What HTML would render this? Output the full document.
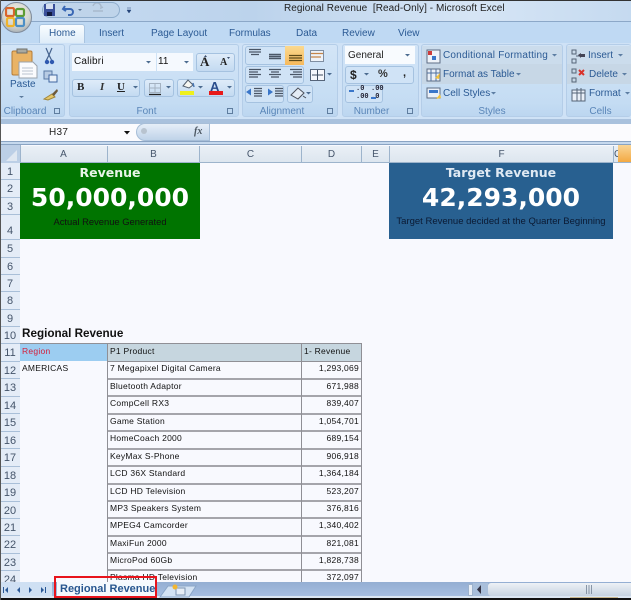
<!DOCTYPE html>
<html><head><meta charset="utf-8">
<style>
html,body{margin:0;padding:0;background:#f8f9fe}
#p{position:relative;width:631px;height:600px;overflow:hidden;background:#f8f9fe;font-family:"Liberation Sans",sans-serif;font-size:9px;color:#111}
#p div{position:absolute;white-space:nowrap}
.rb{color:#2b5a94;font-size:10px}
.lb{color:#5a86b8;font-size:10px;text-align:center;top:106px;height:12px;line-height:12px}
.g{top:44px;height:73px;background:linear-gradient(#d3e5f7 0,#c4dcf3 82%,#bcd6f0 100%);border:1px solid #b4cde8;border-radius:3px;box-sizing:border-box}
.btn{background:linear-gradient(#dfecf9,#c3daf1);border:1px solid #a5c2e0;border-radius:3px;box-sizing:border-box}
.ch{top:146px;height:16px;line-height:17px;background:linear-gradient(#eaf0f6 0,#dde6ef 100%);border-right:1px solid #9db4cc;box-sizing:border-box;text-align:center;font-size:10px;color:#46566c}
.rh{left:0;width:20px;background:#e4ecf7;border-bottom:1px solid #a9bfd8;box-sizing:border-box;text-align:center;font-size:11px;color:#44546a;line-height:19px}
.c{font-size:8.5px;height:17px;line-height:15px;color:#111;letter-spacing:.25px}
.hl{left:107px;width:255px;height:2px;background:#a5a5ab}
.vl{width:1px;background:#8f8f95}
</style></head><body><div id="p">

<!-- tab strip -->
<div style="left:0;top:21px;width:631px;height:1px;background:#8ca8c8"></div>
<div style="left:0;top:22px;width:631px;height:21px;background:#bfd9f3"></div>
<div style="left:39px;top:24px;width:46px;height:20px;background:linear-gradient(#fafdff,#dcebf8);border:1px solid #a9c4e0;border-bottom:0;border-radius:3px 3px 0 0;box-sizing:border-box"></div>
<div class="rb" style="left:49px;top:28px">Home</div>
<div class="rb" style="left:99px;top:28px">Insert</div>
<div class="rb" style="left:151px;top:28px">Page Layout</div>
<div class="rb" style="left:229px;top:28px">Formulas</div>
<div class="rb" style="left:296px;top:28px">Data</div>
<div class="rb" style="left:342px;top:28px">Review</div>
<div class="rb" style="left:398px;top:28px">View</div>

<!-- title bar -->
<div style="left:0;top:0;width:631px;height:21px;background:linear-gradient(90deg,#c8dcf2 0,#bcd3ec 40%,#d6e5f5 75%,#c5daf0 100%)"></div>
<div style="left:0;top:0;width:631px;height:1px;background:#333"></div>
<div style="left:42px;top:2px;width:78px;height:16px;background:#bfd4ea;border:1px solid #8eaccb;border-radius:9px;box-sizing:border-box"></div>
<div style="left:284px;top:3px;font-size:10px;line-height:12px;color:#222;letter-spacing:.06px">Regional Revenue&nbsp; [Read-Only] - Microsoft Excel</div>
<svg style="position:absolute;left:43px;top:3px" width="90" height="14"><rect x="1" y="1" width="11" height="12" fill="#3a4f9a"/><rect x="3" y="1" width="7" height="5" fill="#d5dff0"/><rect x="4" y="9" width="5" height="4" fill="#111a40"/><path d="M22 3l-2 3 3 2M20 6h7a3 3 0 0 1 0 6h-2" fill="none" stroke="#3a68b5" stroke-width="2"/><path d="M35 6h4l-2 2z" fill="#55718f"/><path d="M50 3a4 4 0 0 1 8 2l2-1M50 8h10" fill="none" stroke="#a9bacd" stroke-width="1.5"/><path d="M84 5h4M84 7h4l-2 3z" fill="#26467a" stroke="#26467a" stroke-width=".5"/></svg>
<!-- office orb -->
<div style="left:1px;top:2px;width:31px;height:31px;border-radius:50%;background:radial-gradient(circle at 50% 35%,#f3f1e8 0,#d4d6d0 55%,#8c97a5 100%);border:1px solid #7f8b9b;box-sizing:border-box"></div>
<svg style="position:absolute;left:5px;top:7px" width="22" height="22"><rect x="1" y="1" width="8" height="8" rx="1.5" fill="none" stroke="#d9642c" stroke-width="2.2"/><rect x="11" y="2" width="8" height="7" rx="1.5" fill="none" stroke="#5d9d33" stroke-width="2.2"/><rect x="2" y="11" width="7" height="8" rx="1.5" fill="none" stroke="#eeb32d" stroke-width="2.2"/><rect x="11" y="11" width="8" height="8" rx="1.5" fill="none" stroke="#4c8fc6" stroke-width="2.2"/></svg>

<!-- ribbon -->
<div style="left:0;top:43px;width:631px;height:76px;background:#cfe2f6"></div>
<div class="g" style="left:0;width:65px;border-left:0"></div>
<div class="g" style="left:69px;width:170px"></div>
<div class="g" style="left:242px;width:96px"></div>
<div class="g" style="left:342px;width:77px"></div>
<div class="g" style="left:421px;width:142px"></div>
<div class="g" style="left:566px;width:65px;border-right:0"></div>
<div style="left:422px;top:46px;width:140px;height:18px;background:#cbdcec"></div>
<div style="left:567px;top:46px;width:64px;height:18px;background:#cbdcec"></div>
<div style="left:422px;top:64px;width:140px;height:20px;background:#c7d7e6"></div>
<div style="left:567px;top:64px;width:64px;height:20px;background:#c7d7e6"></div>
<div class="lb" style="left:0;width:50px">Clipboard</div>
<div class="lb" style="left:69px;width:155px">Font</div>
<div class="lb" style="left:242px;width:80px">Alignment</div>
<div class="lb" style="left:342px;width:59px">Number</div>
<div class="lb" style="left:421px;width:142px">Styles</div>
<div class="lb" style="left:568px;width:65px">Cells</div>

<!-- launchers -->
<svg style="position:absolute;left:0;top:105px" width="631" height="11"><g fill="none" stroke="#5f7d9f"><rect x="54.5" y="3.5" width="5" height="5"/><rect x="227.5" y="3.5" width="5" height="5"/><rect x="327.5" y="3.5" width="5" height="5"/><rect x="407.5" y="3.5" width="5" height="5"/></g></svg>

<!-- clipboard -->
<svg style="position:absolute;left:9px;top:47px" width="48" height="55"><rect x="3" y="4" width="20" height="24" rx="1.5" fill="#e9b365" stroke="#b57c36"/><rect x="8" y="2" width="10" height="4" fill="#a9a9a0" stroke="#70706a"/><path d="M10 15h14l4 4v12H10z" fill="#fafbfd" stroke="#9aa3ad"/><path d="M13 21h11M13 24h11M13 27h11" stroke="#b9c3cf"/><path d="M10 49h5l-2.500 2z" fill="#5b7a9c"/></svg>
<div style="left:10px;top:79px;font-size:10px;color:#2b5a94">Paste</div>
<svg style="position:absolute;left:40px;top:47px" width="20" height="56"><path d="M6 1l3 7 3-7M9 8l-3 6M9 8l3 6" fill="none" stroke="#44628d" stroke-width="1.200"/><circle cx="7" cy="15" r="2.200" fill="#2f59b0"/><circle cx="12" cy="15" r="2.200" fill="#2f59b0"/><rect x="4" y="24" width="8" height="8" fill="#b7cbe3" stroke="#5a7aa5"/><rect x="9" y="28" width="8" height="7" fill="#e9f0f8" stroke="#3f66a0"/><path d="M4 52l8-5 3 3-7 3z" fill="#e3c66b" stroke="#a1863a"/><path d="M12 47l5-5 1 2-4 5z" fill="#6d5a3b"/></svg>

<!-- font -->
<div style="left:72px;top:53px;width:84px;height:18px;background:#f5f9fe"></div>
<div style="left:157px;top:53px;width:36px;height:18px;background:#f5f9fe"></div>
<div style="left:74px;top:56px;font-size:10px;color:#111;letter-spacing:.2px">Calibri</div>
<div style="left:158px;top:56px;font-size:10px;color:#111">11</div>
<div class="btn" style="left:196px;top:53px;width:39px;height:19px"></div>
<div style="left:200px;top:54px;font:bold 13px 'Liberation Serif',serif;color:#222">A</div>
<div style="left:220px;top:57px;font:bold 10px 'Liberation Serif',serif;color:#222">A</div>
<div class="btn" style="left:72px;top:79px;width:68px;height:18px"></div>
<div class="btn" style="left:144px;top:79px;width:30px;height:18px"></div>
<div class="btn" style="left:177px;top:79px;width:58px;height:18px"></div>
<div style="left:77px;top:81px;font:bold 11px 'Liberation Serif',serif;color:#222">B</div>
<div style="left:100px;top:81px;font:italic bold 11px 'Liberation Serif',serif;color:#333">I</div>
<div style="left:117px;top:81px;font:bold 11px 'Liberation Serif',serif;color:#222;text-decoration:underline">U</div>
<svg style="position:absolute;left:0;top:45px" width="240" height="60"><path d="M146 16h5l-2.500 2.500zM184 16h5l-2.500 2.500zM133 41h5l-2.500 2.500zM166 41h5l-2.500 2.500zM198 41h5l-2.500 2.500zM227 41h5l-2.500 2.500z" fill="#4c6c90"/><path d="M204 12h3l-1.500-2zM227 12h3l-1.500 2z" fill="#3b4e6e"/><path d="M149.500 38.500h11v9h-11zM155 38.500v9M149.500 43h11" fill="none" stroke="#a4b2c1"/><path d="M149 49.500h12" stroke="#222" stroke-width="1.300"/><rect x="180" y="46" width="14" height="4" fill="#eef01d"/><rect x="209" y="46" width="14" height="4" fill="#e81a1a"/><path d="M183 41l5-6 5 5-4 3z" fill="#f7f7f2" stroke="#54606f"/><path d="M193 38l1 4" stroke="#4a78b5" stroke-width="1.500"/></svg>
<div style="left:210px;top:79px;font:bold 13px 'Liberation Sans',sans-serif;color:#2a4d8c">A</div>

<!-- alignment -->
<div class="btn" style="left:245px;top:46px;width:59px;height:19px;background:#d0e3f6"></div>
<div style="left:285px;top:46px;width:19px;height:19px;background:linear-gradient(#fbd98f,#f6b95c)"></div>
<div class="btn" style="left:245px;top:66px;width:59px;height:18px;background:#d0e3f6"></div>
<div class="btn" style="left:245px;top:85px;width:39px;height:18px;background:#d0e3f6"></div>
<div class="btn" style="left:287px;top:85px;width:26px;height:18px;background:#d0e3f6"></div>
<svg style="position:absolute;left:0;top:0" width="340" height="105"><g stroke="#4a5666" stroke-width="1.200" fill="none">
<path d="M249 49.500h12M249 52h12M251 54.500h8"/>
<path d="M269 54.500h12M269 56.500h12M269 58.500h12" stroke-width="1.400"/>
<path d="M289 55.500h13M289 58h13M289 60.500h13" stroke="#5d4a18"/>
<path d="M249 69.500h12M249 72h9M249 74.500h12M249 77h9"/>
<path d="M269 69.500h12M271 72h8M269 74.500h12M271 77h8"/>
<path d="M290 69.500h12M293 72h9M290 74.500h12M293 77h9"/>
<path d="M254 88.500h8M254 91h8M254 93.500h8M254 96h8"/>
<path d="M275 88.500h8M275 91h8M275 93.500h8M275 96h8"/></g>
<path d="M246 92l5-3.500v7zM273 92l-5-3.500v7z" fill="#3a76c9"/>
<path d="M291 95l7-7 6 5-6 6zM303 96l3 2" fill="#e4ecf5" stroke="#4a4f5a"/>
<path d="M306 92h5l-2.500 2.500z" fill="#4c6c90"/>
<rect x="310.500" y="50.500" width="13" height="11" fill="#eef3f9" stroke="#7f8ea1"/><path d="M311 53.500h12M311 57h10" stroke="#c4854a" stroke-width="1.300"/>
<rect x="310.500" y="69.500" width="14" height="11" fill="#f5f7fb" stroke="#56657a"/><path d="M317.500 70v10M312 75h11" stroke="#3f4d60"/>
<path d="M327 73h5l-2.500 2.500z" fill="#4c6c90"/></svg>

<!-- number -->
<div style="left:345px;top:46px;width:70px;height:18px;background:#f8fbfe"></div>
<div style="left:348px;top:50px;font-size:10px;color:#222">General</div>
<svg style="position:absolute;left:404px;top:52px" width="8" height="6"><path d="M1 2h5l-2.500 2.500z" fill="#4c6c90"/></svg>
<div class="btn" style="left:345px;top:66px;width:69px;height:18px;background:#d0e3f6"></div>
<div class="btn" style="left:345px;top:85px;width:38px;height:18px;background:#d0e3f6"></div>
<div style="left:350px;top:68px;font:bold 12px 'Liberation Sans',sans-serif;color:#222">$</div>
<div style="left:378px;top:68px;font:bold 11px 'Liberation Sans',sans-serif;color:#333">%</div>
<div style="left:403px;top:67px;font:bold 11px 'Liberation Sans',sans-serif;color:#222">,</div>
<svg style="position:absolute;left:364px;top:72px" width="6" height="5"><path d="M0 1h5l-2.500 2.500z" fill="#4c6c90"/></svg>
<div style="left:356px;top:85px;font:bold 7px/8px 'Liberation Mono',monospace;color:#223;width:12px">.0<br>.00</div>
<div style="left:371px;top:85px;font:bold 7px/8px 'Liberation Mono',monospace;color:#223;width:12px">.00<br>.0</div>
<svg style="position:absolute;left:346px;top:86px" width="36" height="16"><path d="M3 4h5v2H3zM25 11h5v2h-5z" fill="#3a76c9"/></svg>

<!-- styles -->
<svg style="position:absolute;left:426px;top:47px" width="16" height="56"><rect x="1" y="3" width="13" height="13" fill="#eef3f9" stroke="#5d6d84"/><rect x="2" y="4" width="4" height="4" fill="#cc3b3b"/><rect x="6" y="9" width="4" height="4" fill="#3a76c9"/><rect x="1" y="22" width="13" height="12" fill="#eaf0f8" stroke="#5d6d84"/><path d="M1 26h13M5 22v12M10 22v12" stroke="#4e6f9e"/><path d="M9 31l5-5-1 6z" fill="#f3c23c"/><rect x="1" y="41" width="13" height="10" fill="#eaf0f8" stroke="#5d6d84"/><rect x="3" y="43" width="9" height="3" fill="#3a76c9"/><path d="M10 52l4-5 1 4z" fill="#f3c23c"/></svg>
<div class="rb" style="left:443px;top:50px;letter-spacing:.2px">Conditional Formatting</div>
<div class="rb" style="left:443px;top:69px">Format as Table</div>
<div class="rb" style="left:443px;top:88px">Cell Styles</div>
<svg style="position:absolute;left:480px;top:50px" width="151" height="50"><path d="M72 4h5l-2.500 2.500zM36 23h5l-2.500 2.500zM11 42h5l-2.500 2.500zM138 4h5l-2.500 2.500zM142 23h5l-2.500 2.500zM145 42h5l-2.500 2.500z" fill="#5d7ea3"/></svg>

<!-- cells -->
<svg style="position:absolute;left:570px;top:48px" width="16" height="56"><g fill="none" stroke="#556477"><path d="M2 2h4v4H2zM2 11h4v4H2zM6 8h4"/><path d="M2 21h4v4H2zM2 30h4v4H2z"/><rect x="2" y="42" width="13" height="11" fill="#eaf0f8"/><path d="M2 45h13M7 40v13M11 40v13"/></g><path d="M8 7l3-2v5zM11 6h4v3h-4z" fill="#445"/><path d="M9 22l5 5M14 22l-5 5" stroke="#d8312a" stroke-width="2"/></svg>
<div class="rb" style="left:588px;top:50px">Insert</div>
<div class="rb" style="left:589px;top:69px">Delete</div>
<div class="rb" style="left:589px;top:88px">Format</div>

<!-- formula bar -->
<div style="left:0;top:119px;width:631px;height:5px;background:#a9c1dd"></div>
<div style="left:0;top:124px;width:631px;height:17px;background:#fbfbfe"></div>
<div style="left:49px;top:127px;font-size:10px;color:#222;letter-spacing:.3px">H37</div>
<svg style="position:absolute;left:123px;top:131px" width="9" height="5"><path d="M1 0h6l-3 3.500z" fill="#111"/></svg>
<div style="left:136px;top:123px;width:74px;height:18px;border-radius:9px 0 0 9px;background:linear-gradient(#e6eef8,#bfd3e9);border:1px solid #a7bed8;box-sizing:border-box"></div>
<div style="left:141px;top:128px;width:6px;height:6px;border-radius:50%;background:#b8c3cf"></div>
<div style="left:194px;top:126px;font:italic bold 10px 'Liberation Serif',serif;color:#4a5560">fx</div>
<div style="left:0;top:141px;width:631px;height:1px;background:#8aa4c3"></div>
<div style="left:0;top:142px;width:631px;height:2px;background:#c6d9ee"></div>
<div style="left:0;top:144px;width:631px;height:1px;background:#8aa4c3"></div>

<!-- headers -->
<div style="left:0;top:145px;width:20px;height:18px;background:#bccfe6"></div>
<svg style="position:absolute;left:6px;top:150px" width="12" height="12"><path d="M11 0v11H0z" fill="#dfe7f1"/></svg>
<div class="ch" style="left:20px;width:88px">A</div>
<div class="ch" style="left:108px;width:92px">B</div>
<div class="ch" style="left:200px;width:102px">C</div>
<div class="ch" style="left:302px;width:60px">D</div>
<div class="ch" style="left:362px;width:28px">E</div>
<div class="ch" style="left:390px;width:224px">F</div>
<div class="ch" style="left:614px;width:5px;text-align:left;overflow:hidden">G</div>
<div style="left:618px;top:145px;width:13px;height:17px;background:linear-gradient(#f9d596,#f3a943)"></div>
<div style="left:20px;top:162px;width:611px;height:1px;background:#9db4cc"></div>
<div style="left:20px;top:145px;width:1px;height:18px;background:#9db4cc"></div>

<!-- row headers -->
<div class="rh" style="top:163px;height:17px">1</div>
<div class="rh" style="top:180px;height:18px">2</div>
<div class="rh" style="top:198px;height:17px">3</div>
<div class="rh" style="top:215px;height:25px;line-height:32px">4</div>
<div class="rh" style="top:240px;height:18px">5</div>
<div class="rh" style="top:258px;height:17px">6</div>
<div class="rh" style="top:275px;height:17px">7</div>
<div class="rh" style="top:292px;height:18px">8</div>
<div class="rh" style="top:310px;height:17px">9</div>
<div class="rh" style="top:327px;height:17px">10</div>
<div class="rh" style="top:344px;height:18px">11</div>
<div class="rh" style="top:362px;height:17px">12</div>
<div class="rh" style="top:379px;height:18px">13</div>
<div class="rh" style="top:397px;height:17px">14</div>
<div class="rh" style="top:414px;height:18px">15</div>
<div class="rh" style="top:432px;height:17px">16</div>
<div class="rh" style="top:449px;height:18px">17</div>
<div class="rh" style="top:467px;height:17px">18</div>
<div class="rh" style="top:484px;height:18px">19</div>
<div class="rh" style="top:502px;height:17px">20</div>
<div class="rh" style="top:519px;height:17px">21</div>
<div class="rh" style="top:536px;height:18px">22</div>
<div class="rh" style="top:554px;height:17px">23</div>
<div class="rh" style="top:571px;height:18px">24</div>

<!-- KPI -->
<div style="left:20px;top:163px;width:180px;height:76px;background:#007400"></div>
<div style="left:20px;top:164px;width:180px;text-align:center;font:bold 12.5px/18px 'DejaVu Sans',sans-serif;color:#e8f5e8">Revenue</div>
<div style="left:20px;top:181px;width:180px;text-align:center;font:bold 25px/34px 'DejaVu Sans',sans-serif;color:#fff">50,000,000</div>
<div style="left:20px;top:216px;width:180px;text-align:center;font-size:9.4px;line-height:12px;color:#111">Actual Revenue Generated</div>
<div style="left:389px;top:163px;width:224px;height:76px;background:#286090"></div>
<div style="left:389px;top:164px;width:224px;text-align:center;font:bold 12.5px/18px 'DejaVu Sans',sans-serif;color:#dfe9f3">Target Revenue</div>
<div style="left:389px;top:181px;width:224px;text-align:center;font:bold 25px/34px 'DejaVu Sans',sans-serif;color:#fff">42,293,000</div>
<div style="left:389px;top:216px;width:224px;text-align:center;font-size:9.5px;line-height:12px;color:#0b1a33">Target Revenue decided at the Quarter Beginning</div>

<!-- table -->
<div style="left:22px;top:327px;font:bold 11.7px/14px 'Liberation Sans',sans-serif;color:#111">Regional Revenue</div>
<div style="left:108px;top:344px;width:254px;height:17px;background:#c6d6df"></div>
<div style="left:20px;top:344px;width:88px;height:17px;background:#9ccdf1"></div>
<div class="c" style="left:22px;top:344px;color:#d4203c">Region</div>
<div class="c" style="left:110px;top:344px">P1 Product</div>
<div class="c" style="left:304px;top:344px">1- Revenue</div>
<div style="left:20px;top:343px;width:342px;height:1px;background:#909096"></div>
<div style="left:107px;top:361px;width:255px;height:1px;background:#909096"></div>
<div class="hl" style="top:378px"></div><div class="hl" style="top:395px"></div><div class="hl" style="top:413px"></div><div class="hl" style="top:430px"></div><div class="hl" style="top:448px"></div><div class="hl" style="top:465px"></div><div class="hl" style="top:483px"></div><div class="hl" style="top:500px"></div><div class="hl" style="top:517px"></div><div class="hl" style="top:535px"></div><div class="hl" style="top:552px"></div><div class="hl" style="top:569px"></div>
<div class="vl" style="left:107px;top:343px;height:240px"></div>
<div class="vl" style="left:301px;top:343px;height:240px"></div>
<div class="vl" style="left:361px;top:343px;height:240px"></div>
<div class="c" style="left:22px;top:361px">AMERICAS</div>

<div class="c" style="left:110px;top:361px">7 Megapixel Digital Camera</div><div class="c" style="right:272px;top:361px">1,293,069</div>
<div class="c" style="left:110px;top:379px">Bluetooth Adaptor</div><div class="c" style="right:272px;top:379px">671,988</div>
<div class="c" style="left:110px;top:396px">CompCell RX3</div><div class="c" style="right:272px;top:396px">839,407</div>
<div class="c" style="left:110px;top:414px">Game Station</div><div class="c" style="right:272px;top:414px">1,054,701</div>
<div class="c" style="left:110px;top:431px">HomeCoach 2000</div><div class="c" style="right:272px;top:431px">689,154</div>
<div class="c" style="left:110px;top:449px">KeyMax S-Phone</div><div class="c" style="right:272px;top:449px">906,918</div>
<div class="c" style="left:110px;top:466px">LCD 36X Standard</div><div class="c" style="right:272px;top:466px">1,364,184</div>
<div class="c" style="left:110px;top:484px">LCD HD Television</div><div class="c" style="right:272px;top:484px">523,207</div>
<div class="c" style="left:110px;top:501px">MP3 Speakers System</div><div class="c" style="right:272px;top:501px">376,816</div>
<div class="c" style="left:110px;top:518px">MPEG4 Camcorder</div><div class="c" style="right:272px;top:518px">1,340,402</div>
<div class="c" style="left:110px;top:536px">MaxiFun 2000</div><div class="c" style="right:272px;top:536px">821,081</div>
<div class="c" style="left:110px;top:553px">MicroPod 60Gb</div><div class="c" style="right:272px;top:553px">1,828,738</div>
<div class="c" style="left:110px;top:570px">Plasma HD Television</div><div class="c" style="right:272px;top:570px">372,097</div>

<!-- bottom sheet tabs -->
<div style="left:0;top:582px;width:631px;height:14px;background:linear-gradient(#94aed2,#a6bee0)"></div>
<div style="left:0;top:596px;width:631px;height:2px;background:#dbe6f2"></div>
<div style="left:0;top:582px;width:52px;height:14px;background:#cfe0f3"></div>
<div style="left:57px;top:582px;width:98px;height:15px;background:#f5f9fd"></div>
<svg style="position:absolute;left:0;top:582px" width="200" height="16"><path d="M3 5h1v6H3zM8 5l-3 3 3 3zM20 5l-3 3 3 3zM29 5l3 3-3 3zM41 5l3 3-3 3zM45 5h1v6h-1z" fill="#2a5896"/><path d="M160 15l8-11h28l-7 11z" fill="#d3e2f3" stroke="#8ba6c8"/><rect x="176" y="6" width="9" height="7" fill="#e6edf6" stroke="#7b93b2"/><circle cx="175" cy="5" r="2.500" fill="#f2b632"/></svg>
<div style="left:60px;top:582px;font:bold 11px/15px 'Liberation Sans',sans-serif;color:#28568f">Regional Revenue</div>
<div style="left:54px;top:576px;width:103px;height:22px;border:2px solid #e8141c;box-sizing:border-box"></div>
<!-- scrollbar -->
<div style="left:468px;top:584px;width:5px;height:12px;background:#e9eff7;border:1px solid #9db2cc;box-sizing:border-box"></div>
<div style="left:473px;top:583px;width:15px;height:13px;background:#a9bfdb"></div>
<svg style="position:absolute;left:476px;top:584px" width="8" height="11"><path d="M5 1l-4 4.500L5 10z" fill="#334"/></svg>
<div style="left:488px;top:583px;width:143px;height:13px;background:linear-gradient(#edf1f6,#c6d3e1);border-radius:3px 0 0 3px"></div>
<svg style="position:absolute;left:585px;top:585px" width="8" height="9"><path d="M1.500 0v9M4 0v9M6.500 0v9" stroke="#8795a6"/></svg>
<div style="left:0;top:598px;width:631px;height:2px;background:#111"></div>
<div style="left:570px;top:597px;width:48px;height:1px;background:#c9b78e"></div>
<div style="left:0;top:0;width:1px;height:600px;background:#555"></div>
</div></body></html>
